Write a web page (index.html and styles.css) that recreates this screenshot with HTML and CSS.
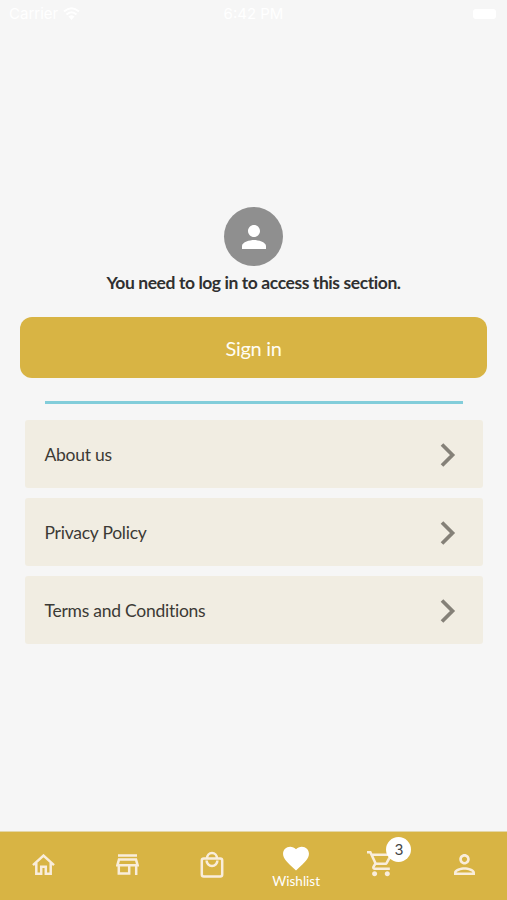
FILE: index.html
```html
<!DOCTYPE html>
<html lang="en">
<head>
<meta charset="utf-8">
<title>Wishlist</title>
<link rel="stylesheet" href="styles.css">
</head>
<body>
<div class="screen">
  <header class="status">
    <span class="carrier">Carrier <svg width="17" height="13" viewBox="0 0 17 13"><path d="M1 4.500Q8.500-2 16 4.500M3.500 7.500Q8.500 3 13.500 7.500" fill="none" stroke="#fff" stroke-width="2"/><path d="M8.500 13L5.500 9.500Q8.500 7 11.500 9.500Z" fill="#fff"/></svg></span>
    <span class="time">6:42 PM</span>
    <span class="power"><i class="battery"></i></span>
  </header>
  <main class="content">
    <div class="avatar"><svg width="24" height="24" viewBox="4 4 16 16"><path d="M12 12c2.210 0 4-1.790 4-4s-1.790-4-4-4-4 1.790-4 4 1.790 4 4 4zm0 2c-2.670 0-8 1.340-8 4v2h16v-2c0-2.660-5.330-4-8-4z"/></svg></div>
    <p class="message">You need to log in to access this section.</p>
    <button class="signin">Sign in</button>
    <hr class="divider">
    <nav class="links">
      <a class="row"><span>About us</span><svg class="chevron" width="16" height="26" viewBox="0 0 16 26"><path d="M2 2.500L12.500 13L2 23.500"/></svg></a>
      <a class="row"><span>Privacy Policy</span><svg class="chevron" width="16" height="26" viewBox="0 0 16 26"><path d="M2 2.500L12.500 13L2 23.500"/></svg></a>
      <a class="row"><span>Terms and Conditions</span><svg class="chevron" width="16" height="26" viewBox="0 0 16 26"><path d="M2 2.500L12.500 13L2 23.500"/></svg></a>
    </nav>
  </main>
  <footer class="tabs">
    <a class="tab"><svg width="23" height="21" viewBox="0 0 23 21"><path class="line" d="M1 11.200L11.500 1.600L22 11.200M4.300 9V19.700H9.200V12.700H13.800V19.700H18.700V9"/></svg></a>
    <a class="tab"><svg width="23" height="21" viewBox="0 0 23 21"><path class="line" d="M2 1.400H21M3 5.600H20L21.600 11.200H1.400ZM2.800 11.200V19.600H13.200V11.200M20.200 11.200V21"/></svg></a>
    <a class="tab"><svg width="24" height="27" viewBox="0 0 24 27"><rect class="line" x="1.800" y="7.400" width="20.400" height="18" rx="2"/><path class="line" d="M7 7.400a5 5.500 0 0 1 10 0M6.600 9.500a5.400 5.400 0 0 0 10.800 0"/></svg></a>
    <a class="tab active"><svg width="26" height="25" viewBox="2 2.500 20 19.300"><path d="M12 21.350l-1.450-1.320C5.400 15.360 2 12.280 2 8.500 2 5.420 4.420 3 7.500 3c1.740 0 3.410.81 4.500 2.090C13.090 3.810 14.760 3 16.500 3 19.580 3 22 5.420 22 8.500c0 3.780-3.400 6.860-8.550 11.540L12 21.350z"/></svg><span>Wishlist</span></a>
    <a class="tab"><span class="cart"><svg width="26" height="26" viewBox="1 2 20.500 20.500"><path d="M15.550 13c.75 0 1.410-.41 1.750-1.030l3.580-6.490A.996.996 0 0 0 20.010 4H5.210l-.94-2H1v2h2l3.600 7.590-1.350 2.440C4.520 15.370 5.480 17 7 17h12v-2H7l1.100-2h7.450zM6.160 6h12.150l-2.760 5H8.530L6.160 6zM7 18c-1.100 0-1.990.9-1.990 2S5.900 22 7 22s2-.9 2-2-.9-2-2-2zm10 0c-1.100 0-1.990.9-1.990 2s.89 2 1.990 2 2-.9 2-2-.9-2-2-2z"/></svg><b class="badge">3</b></span></a>
    <a class="tab"><svg width="21" height="21" viewBox="4 4 16 16"><path d="M12 6c1.100 0 2 .9 2 2s-.9 2-2 2-2-.9-2-2 .9-2 2-2m0 10c2.700 0 5.800 1.290 6 2H6c.23-.72 3.310-2 6-2m0-12C9.790 4 8 5.790 8 8s1.790 4 4 4 4-1.790 4-4-1.790-4-4-4zm0 10c-2.670 0-8 1.340-8 4v2h16v-2c0-2.660-5.330-4-8-4z"/></svg></a>
  </footer>
</div>
</body>
</html>
```
FILE: styles.css
```css
* { box-sizing: border-box; }
body { margin: 0; background: #f6f6f6; font-family: Lato, "Liberation Sans", sans-serif; color: #303030; }
.screen { height: 900px; display: flex; flex-direction: column; }
.status { height: 27px; padding: 0 11px 0 9px; display: grid; grid-template-columns: 1fr auto 1fr; align-items: center; font: 15px Inter, sans-serif; color: #fff; }
.carrier { display: flex; align-items: center; gap: 5px; }
.time { padding-left: 2px; }
.power { display: flex; justify-content: flex-end; }
.battery { width: 23px; height: 10px; border-radius: 3px; background: #fff; }
.content { flex: 1; padding-top: 180px; display: flex; flex-direction: column; align-items: center; }
.avatar { width: 59px; height: 59px; border-radius: 50%; background: #8f8f8f; display: flex; align-items: center; justify-content: center; }
.avatar svg { fill: #fff; }
.message { margin: 5px 0 0; font-size: 17.500px; line-height: 24px; font-weight: 700; letter-spacing: -0.420px; }
.signin { margin-top: 22px; width: 467px; height: 61px; border: 0; border-radius: 12px; background: #d8b444; color: #fffdf3; font: 20px Lato, sans-serif; letter-spacing: -0.300px; padding: 1px 0 0; }
.divider { width: 418px; height: 3px; margin: 23px 0 16px; border: 0; background: #82cdda; }
.links { width: 458px; display: grid; gap: 10px; }
.row { height: 68px; padding: 1px 27px 0 20px; border-radius: 3px; background: #f1ede2; display: flex; align-items: center; justify-content: space-between; font-size: 17.500px; letter-spacing: -0.250px; color: #3c3a35; }
.chevron path { fill: none; stroke: #858178; stroke-width: 3.700; }
.tabs { height: 69px; background: #d8b444; border-top: 1px solid #e3d7a9; display: grid; grid-template-columns: repeat(6, 1fr); padding-left: 1px; }
.tab { display: flex; flex-direction: column; align-items: center; justify-content: center; padding-bottom: 4px; }
.tab svg { fill: #f9eddb; display: block; }
.tab .line { fill: none; stroke: #f9eddb; stroke-width: 2.500; }
.active { color: #fff; font-size: 13.500px; line-height: 16px; padding: 3px 0 0; gap: 2px; }
.active svg { fill: #fff; }
.cart { position: relative; }
.badge { position: absolute; left: 19px; top: -14px; width: 25px; height: 25px; border-radius: 50%; background: #fff; color: #444; font: 14.500px/26px Inter, sans-serif; text-align: center; }
```
